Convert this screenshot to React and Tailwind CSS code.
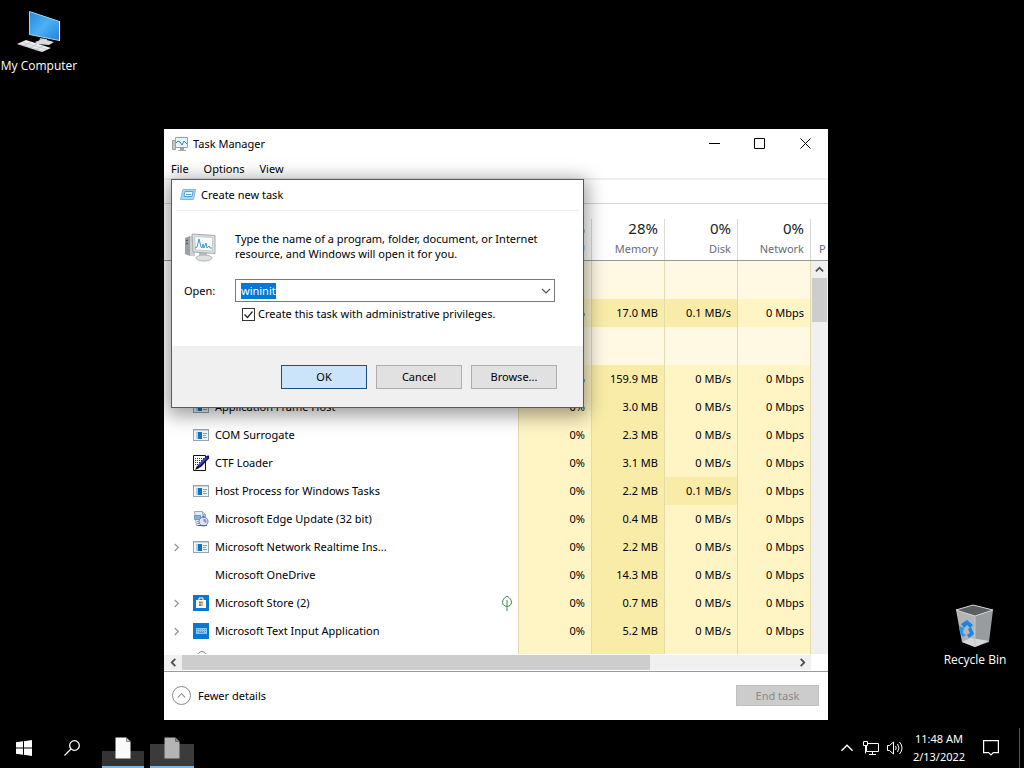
import React, { useEffect, useRef, useState } from 'react';

const groupTint = 'bg-[#fff8e2]';
const low = 'bg-[#fff4c4]';
const mid = 'bg-[#f9eca8]';

const processes = [
  { group: true },
  { name: '', icon: null, cpu: '0%', memory: '17.0 MB', disk: '0.1 MB/s', network: '0 Mbps', busyDisk: true },
  { group: true },
  { name: '', icon: null, cpu: '0%', memory: '159.9 MB', disk: '0 MB/s', network: '0 Mbps' },
  { name: 'Application Frame Host', icon: 'app', cpu: '0%', memory: '3.0 MB', disk: '0 MB/s', network: '0 Mbps' },
  { name: 'COM Surrogate', icon: 'app', cpu: '0%', memory: '2.3 MB', disk: '0 MB/s', network: '0 Mbps' },
  { name: 'CTF Loader', icon: 'ctf', cpu: '0%', memory: '3.1 MB', disk: '0 MB/s', network: '0 Mbps' },
  { name: 'Host Process for Windows Tasks', icon: 'app', cpu: '0%', memory: '2.2 MB', disk: '0.1 MB/s', network: '0 Mbps', busyDisk: true },
  { name: 'Microsoft Edge Update (32 bit)', icon: 'update', cpu: '0%', memory: '0.4 MB', disk: '0 MB/s', network: '0 Mbps' },
  { name: 'Microsoft Network Realtime Ins...', icon: 'app', expandable: true, cpu: '0%', memory: '2.2 MB', disk: '0 MB/s', network: '0 Mbps' },
  { name: 'Microsoft OneDrive', icon: null, cpu: '0%', memory: '14.3 MB', disk: '0 MB/s', network: '0 Mbps' },
  { name: 'Microsoft Store (2)', icon: 'store', expandable: true, leaf: true, cpu: '0%', memory: '0.7 MB', disk: '0 MB/s', network: '0 Mbps' },
  { name: 'Microsoft Text Input Application', icon: 'keyboard', expandable: true, cpu: '0%', memory: '5.2 MB', disk: '0 MB/s', network: '0 Mbps' },
  { name: '', icon: 'partial', cpu: '', memory: '', disk: '', network: '' },
];

const Chevron = ({ className, points, width = 2 }) => (
  <svg viewBox="0 0 10 10" className={className} fill="none" stroke="currentColor" strokeWidth={width}>
    <polyline points={points} />
  </svg>
);

const up = '1,7 5,3 9,7';
const down = '1,3 5,7 9,3';
const left = '7,1 3,5 7,9';
const right = '3,1 7,5 3,9';

const AppIcon = () => (
  <svg viewBox="0 0 16 16" className="size-4">
    <rect x="0.5" y="2.5" width="15" height="11" fill="#f1f5f9" stroke="#98a3ad" />
    <rect x="1" y="3" width="14" height="1" fill="#c9d3dc" />
    <rect x="3" y="5" width="2" height="7" fill="#a9d0ef" />
    <rect x="5" y="5" width="4" height="7" fill="#1272c4" />
    <path d="M10 6.5h4M10 8.5h3M10 10.5h4" stroke="#8ba0b4" />
  </svg>
);

const CtfIcon = () => (
  <svg viewBox="0 0 16 16" className="size-4">
    <path d="M0.5 0.5h12v15h-12z" fill="#fff" stroke="#111" />
    <path d="M2 3.5h9M2 5.5h8M2 7.5h6M2 9.5h4" stroke="#333" strokeDasharray="1 1" />
    <path d="M3 14l2-4 8-8.5q1.5-1.5 3-1v3l-8 8.5z" fill="#10107c" />
    <path d="M6 10.5l8-8" stroke="#7d80dc" />
    <path d="M2 15l2-4 2 2z" fill="#000" />
  </svg>
);

const UpdateIcon = () => (
  <svg viewBox="0 0 16 16" className="size-4">
    <path d="M1.5 0.5h8l3 3v11h-9z" fill="#e4edf7" stroke="#9aabc2" />
    <path d="M9.5 0.5v3h3" fill="none" stroke="#9aabc2" />
    <path d="M1.5 4.5h6v4h-6z" fill="#7cb6dd" stroke="#6f97bd" />
    <path d="M4 10.5h2M4 12.5h2" stroke="#8fa2b8" />
    <circle cx="10.5" cy="10.5" r="4.5" fill="#dde3f6" stroke="#6f78bd" />
    <path d="M10.5 10.5V7.5A3 3 0 0 1 13 12z" fill="#8b93d6" />
    <path d="M5 14.5h9" stroke="#5561a0" />
    <path d="M10.5 4.5v2" stroke="#5561a0" strokeWidth="2" />
  </svg>
);

const StoreIcon = () => (
  <svg viewBox="0 0 16 16" className="size-4">
    <rect width="16" height="16" fill="#0f76cf" />
    <path d="M6 5V3h4v2" fill="none" stroke="#fff" />
    <path d="M3 5h10v8H3z" fill="#fff" />
    <path d="M6 6.5h2v2H6z" fill="#e8522d" />
    <path d="M8 6.5h2v2H8z" fill="#7eb93d" />
    <path d="M6 9h2v2H6z" fill="#2d9be8" />
    <path d="M8 9h2v2H8z" fill="#f3b81f" />
  </svg>
);

const KeyboardIcon = () => (
  <svg viewBox="0 0 16 16" className="size-4">
    <rect width="16" height="16" fill="#0f76cf" />
    <rect x="3" y="5" width="11" height="6" fill="#8cc3f3" />
    <path d="M4 6.5h9M4 8.5h9" stroke="#4c9de2" strokeDasharray="1 1" />
    <path d="M6 9.5h5" stroke="#4c9de2" />
  </svg>
);

const PartialIcon = () => (
  <svg viewBox="0 0 16 16" className="size-4">
    <circle cx="9" cy="5" r="4.5" fill="#f3f3f3" stroke="#8d8d8d" />
  </svg>
);

const icons = {
  app: <AppIcon />,
  ctf: <CtfIcon />,
  update: <UpdateIcon />,
  store: <StoreIcon />,
  keyboard: <KeyboardIcon />,
  partial: <PartialIcon />,
};

const LeafIcon = () => (
  <svg viewBox="0 0 12 16" className="w-3 h-4" fill="none" stroke="#3c8a4e">
    <path d="M6 1C3 3 1.5 5 1.5 7.5S3.5 11 6 11.5C8.5 11 10.5 10 10.5 7.5S9 3 6 1zM6 5v11" />
  </svg>
);

const MonitorIcon = ({ className }) => (
  <svg viewBox="0 0 32 32" className={className}>
    <path d="M1 7l5-2v20l-5-2z" fill="#9ba0a4" />
    <path d="M6 5h5v20H6z" fill="#ced1d4" />
    <path d="M2 10l2-1M2 13l2-1" stroke="#444" />
    <path d="M15 22h8v4h-8z" fill="#b5babd" />
    <ellipse cx="20" cy="27" rx="8" ry="3" fill="#dfe1e3" stroke="#b3b7ba" />
    <path d="M8 3l23 1.5v18l-22-1.5z" fill="#dcdfe1" stroke="#a5aaad" />
    <path d="M10.5 5.5l18 1v13.500l-17-1z" fill="#f8fcff" stroke="#c5ccd1" />
    <path d="M11 17l2-1 2-8 2 8 1 1 1-4 1 4 2-5 1 5 2-2 1 2h2" fill="none" stroke="#3f9ac6" />
  </svg>
);

const TaskManagerIcon = () => (
  <svg viewBox="0 0 16 16" className="size-4">
    <path d="M0.5 4.5h3v9h-3z" fill="#c4c8cb" stroke="#989da1" />
    <path d="M3.5 1.5h12v10h-12z" fill="#e9f4fa" stroke="#98a1a7" />
    <path d="M4 7l2-2 2 1 2 3 2-4 3 3" fill="none" stroke="#2787b5" />
    <path d="M8 12h4v2H8z" fill="#9ba1a5" />
    <path d="M6 14.5h8" stroke="#a9aeb2" />
  </svg>
);

const RunIcon = () => (
  <svg viewBox="0 0 16 12" className="w-4 h-3">
    <path d="M3 0.5h12.5l-2 10H0.5z" fill="#a9d5ef" stroke="#86b8d8" />
    <path d="M5 2.5h8l-1 5H4z" fill="#e6f6ff" stroke="#5ba0ca" />
    <path d="M6 5.5h5" stroke="#5ba0ca" />
  </svg>
);

const ComputerIcon = () => (
  <svg viewBox="0 0 48 48" className="size-12">
    <defs>
      <linearGradient id="screen" x1="0" y1="0" x2="1" y2="1">
        <stop offset="0" stopColor="#2588dc" />
        <stop offset="0.5" stopColor="#4bb0f5" />
        <stop offset="1" stopColor="#1d83d8" />
      </linearGradient>
    </defs>
    <path d="M25 30l7 1v4l-8-1z" fill="#aeb5ba" />
    <path d="M20 34l8-3 11 3-5 3-12-1z" fill="#d9dcde" />
    <path d="M14.5 3.5l30 10v19l-30-6z" fill="url(#screen)" stroke="#9ed4f5" />
    <path d="M44.5 13v20" stroke="#e8f4fb" />
    <path d="M2 36l9-4 25 8-9 4z" fill="#eceeef" />
    <path d="M5 36l23 7M8 34.5l24 7M8 38l8-4M14 40l8-4M20 42l8-4" stroke="#b9bec2" strokeWidth="0.7" />
  </svg>
);

const RecycleIcon = () => (
  <svg viewBox="0 0 48 48" className="size-12">
    <path d="M5 8L24 13v32L11 40z" fill="#b3b5b6" />
    <path d="M24 13L42 8l-4 32-14 5z" fill="#999c9e" />
    <path d="M5 8L22 3l20 5-18 6z" fill="#5b5e60" stroke="#d5d7d8" />
    <path d="M11 40l9-4 18 3-14 6z" fill="#d6d8d9" />
    <path d="M24 14v31" stroke="#c2c5c7" />
    <path d="M10 22l6-4 6 5-3 3-3-3-3 3z" fill="#1787e5" />
    <path d="M8 24l5 2-1 5 3 2-3 2-3-4z" fill="#2a96ee" />
    <path d="M20 25l3 7-5 4-2-3 3-2-2-4z" fill="#1787e5" />
  </svg>
);

const FileIcon = ({ dim }) => (
  <svg viewBox="0 0 16 22" className="w-4 h-[22px]">
    <path d="M0.5 0.5h11l4 4v17h-15z" fill={dim ? '#b4b4b4' : '#fafafa'} />
    <path d="M11.5 0.5v4h4z" fill={dim ? '#8f8f8f' : '#c9c9c9'} stroke="#333" strokeWidth="0.5" />
  </svg>
);

const HeaderCell = ({ value, label }) => (
  <th className="p-0 pt-[15px] font-normal align-top">
    <div className="h-[41px] border-l border-[#d9d9d9] pr-1.5 text-right">
      <div className="text-[15px] leading-[18px] text-[#222]">{value}</div>
      <div className="leading-[23px] text-[#6b6b78]">{label}</div>
    </div>
  </th>
);

const ProcessRow = ({ process }) => {
  const { name, icon, expandable, leaf, group, cpu, memory, disk, network, busyDisk } = process;
  const cell = 'p-0 pr-1.5 text-right border-l border-[#e2dbad]';

  if (group) {
    return (
      <tr className="h-[38px]">
        <td className="p-0" />
        {[0, 1, 2, 3].map((i) => (
          <td key={i} className={`${cell} ${groupTint}`} />
        ))}
        <td className="p-0 border-l border-[#e2dbad]" />
      </tr>
    );
  }

  return (
    <tr className="h-7">
      <td className="p-0">
        <div className="flex items-center h-7 pl-2 pr-[5px]">
          <span className="w-[21px]">
            {expandable && <Chevron className="size-[9px] text-[#999]" points={right} width={1.5} />}
          </span>
          <span className="w-[22px]">{icon && icons[icon]}</span>
          <span className="flex-1">{name}</span>
          {leaf && <LeafIcon />}
        </div>
      </td>
      <td className={`${cell} ${low}`}>{cpu}</td>
      <td className={`${cell} ${mid}`}>{memory}</td>
      <td className={`${cell} ${busyDisk ? mid : low}`}>{disk}</td>
      <td className={`${cell} ${low}`}>{network}</td>
      <td className="p-0 border-l border-[#e2dbad]" />
    </tr>
  );
};

const TaskManager = () => (
  <section className="absolute left-[164px] top-[129px] w-[664px] bg-white">
    {/* Title bar */}
    <header className="flex items-center h-[29px] pl-2">
      <TaskManagerIcon />
      <h1 className="flex-1 pl-[5px]">Task Manager</h1>
      <button aria-label="Minimize" className="flex items-center justify-center w-[46px] h-[29px]">
        <svg viewBox="0 0 11 11" className="size-[11px]" stroke="#000"><path d="M0 5.5h11" /></svg>
      </button>
      <button aria-label="Maximize" className="flex items-center justify-center w-[45px] h-[29px]">
        <svg viewBox="0 0 11 11" className="size-[11px]" stroke="#000" fill="none"><path d="M0.5 0.5h10v10h-10z" /></svg>
      </button>
      <button aria-label="Close" className="flex items-center justify-center w-[46px] h-[29px]">
        <svg viewBox="0 0 11 11" className="size-[11px]" stroke="#000"><path d="M0.5 0.5l10 10M10.5 0.5l-10 10" /></svg>
      </button>
    </header>

    <nav className="flex h-5 pt-px pl-[7px] gap-[15px]">
      <button>File</button>
      <button>Options</button>
      <button>View</button>
    </nav>
    <div className="h-[26px] border-t-2 border-b border-t-[#efefef] border-b-[#d4d4d4]" />

    {/* Process list */}
    <div className="grid h-[450px] overflow-hidden">
      <table className="col-start-1 row-start-1 self-start w-full table-fixed border-separate border-spacing-0">
        <colgroup>
          <col />
          <col className="w-[73px]" />
          <col className="w-[73px]" />
          <col className="w-[73px]" />
          <col className="w-[73px]" />
          <col className="w-[18px]" />
        </colgroup>
        <thead>
          <tr className="h-[57px] [&>th]:border-b [&>th]:border-[#999]">
            <th aria-label="Name" className="p-0" />
            <HeaderCell value="0%" label="CPU" />
            <HeaderCell value="28%" label="Memory" />
            <HeaderCell value="0%" label="Disk" />
            <HeaderCell value="0%" label="Network" />
            <th className="p-0 pt-[15px] font-normal align-top">
              <div className="h-[41px] border-l border-[#d9d9d9] pl-2 pt-[18px] text-left leading-[23px] text-[#6b6b78]">P</div>
            </th>
          </tr>
        </thead>
        <tbody>
          {processes.map((process, index) => (
            <ProcessRow key={index} process={process} />
          ))}
        </tbody>
      </table>
      <div className="col-start-1 row-start-1 justify-self-end flex flex-col w-[17px] mt-[57px] pr-px bg-[#f0f0f0] text-[#505050]">
        <button aria-label="Scroll up" className="flex items-center justify-center h-[17px]">
          <Chevron className="size-[9px]" points={up} />
        </button>
        <div className="h-11 ml-px bg-[#cdcdcd]" />
        <div className="flex-1" />
        <button aria-label="Scroll down" className="flex items-center justify-center h-[17px]">
          <Chevron className="size-[9px]" points={down} />
        </button>
      </div>
    </div>

    <div className="flex h-[18px] py-px border-b border-[#999]">
      <div className="flex flex-1 bg-[#f0f0f0] text-[#505050]">
        <button aria-label="Scroll left" className="flex items-center justify-center w-[18px]">
          <Chevron className="size-[9px]" points={left} />
        </button>
        <div className="flex-1"><div className="w-[76.5%] h-full bg-[#cdcdcd]" /></div>
        <button aria-label="Scroll right" className="flex items-center justify-center w-[17px]">
          <Chevron className="size-[9px]" points={right} />
        </button>
      </div>
      <div className="w-[17px]" />
    </div>

    <footer className="flex items-center justify-between h-12 pb-px pl-2 pr-[9px]">
      <button className="flex items-center gap-[7px]">
        <span className="flex items-center justify-center size-[19px] rounded-full border border-[#8a8a8a] text-[#8a8a8a]">
          <Chevron className="size-[9px]" points={up} width={1.2} />
        </span>
        Fewer details
      </button>
      <button disabled className="w-[83px] h-[21px] border border-[#bfbfbf] bg-[#cccccc] text-[#8a8a8a]">
        End task
      </button>
    </footer>
  </section>
);

const CreateTaskDialog = () => {
  const [command, setCommand] = useState('wininit');
  const [elevated, setElevated] = useState(true);
  const inputRef = useRef(null);

  useEffect(() => {
    inputRef.current.focus();
    inputRef.current.select();
  }, []);

  return (
    <form
      onSubmit={(e) => e.preventDefault()}
      className="absolute left-[171px] top-[179px] w-[413px] border border-[#5a5a5a] bg-white shadow-[0_4px_18px_3px_rgba(0,0,0,0.4)]"
    >
      <header className="flex items-center h-[31px] mx-1 pl-1 gap-[5px] border-b border-[#ededed]">
        <RunIcon />
        <h2>Create new task</h2>
      </header>

      <div className="h-[135px] px-3 pt-5">
        <div className="flex gap-[19px]">
          <MonitorIcon className="size-8" />
          <p className="leading-[15px]">
            Type the name of a program, folder, document, or Internet<br />
            resource, and Windows will open it for you.
          </p>
        </div>
        <div className="flex items-center mt-4 pr-4">
          <label htmlFor="command" className="w-[51px]">Open:</label>
          <div className="flex flex-1 h-[23px] border border-[#7a7a7a]">
            <input
              id="command"
              ref={inputRef}
              value={command}
              onChange={(e) => setCommand(e.target.value)}
              className="flex-1 min-w-0 pl-[5px] leading-4 outline-none caret-transparent selection:bg-[#0078d7] selection:text-white"
            />
            <button type="button" aria-label="Show history" className="flex items-center justify-center w-[17px]">
              <Chevron className="size-[10px] text-[#555]" points={down} width={1.2} />
            </button>
          </div>
        </div>
        <label className="flex items-center gap-[3px] mt-1 pl-[58px]">
          <span className="grid size-[13px]">
            <input
              type="checkbox"
              checked={elevated}
              onChange={(e) => setElevated(e.target.checked)}
              className="col-start-1 row-start-1 size-[13px] appearance-none border border-[#333]"
            />
            {elevated && (
              <svg viewBox="0 0 13 13" className="col-start-1 row-start-1 size-[13px] pointer-events-none" fill="none" stroke="#222">
                <path d="M2.5 6.5l3 3 5-6" strokeWidth="1.2" />
              </svg>
            )}
          </span>
          Create this task with administrative privileges.
        </label>
      </div>

      <div className="flex justify-end gap-[9px] h-[61px] pt-[19px] pr-[26px] bg-[#f0f0f0]">
        <button className="w-[86px] h-6 border border-[#1b4f7d] bg-[#cce4f9]">OK</button>
        <button type="button" className="w-[86px] h-6 border border-[#adadad] bg-[#e1e1e1]">Cancel</button>
        <button type="button" className="w-[86px] h-6 border border-[#adadad] bg-[#e1e1e1]">Browse...</button>
      </div>
    </form>
  );
};

const Taskbar = () => (
  <footer className="flex items-stretch h-10 text-white">
    <button aria-label="Start" className="flex items-center justify-center w-12">
      <svg viewBox="0 0 16 16" className="size-4" fill="#fff">
        <path d="M0 2.3l7-1v6.2H0zM8 1.2L16 0v7.5H8zM0 8.5h7v6.2l-7-1zM8 8.5h8V16l-8-1.2z" />
      </svg>
    </button>
    <button aria-label="Search" className="flex items-center justify-center w-12">
      <svg viewBox="0 0 16 16" className="size-4" fill="none" stroke="#fff" strokeWidth="1.3">
        <circle cx="10.5" cy="5.5" r="4.8" />
        <path d="M7 9l-6.5 6.5" />
      </svg>
    </button>
    <div className="flex items-end gap-1.5 pl-1.5">
      <button aria-label="Document" className="flex items-start justify-center w-[42px] h-[31px] border-b-2 border-[#76b9ed] bg-linear-to-b from-transparent from-50% to-[#333] to-50%">
        <FileIcon />
      </button>
      <button aria-label="Document in background" className="flex items-start justify-center w-11 h-[31px] border-b-2 border-[#76b9ed] bg-linear-to-b from-transparent from-25% to-[#3b3b3b] to-25%">
        <FileIcon dim />
      </button>
    </div>
    <div className="flex flex-1 items-center justify-end">
      <button aria-label="Show hidden icons" className="flex justify-center w-6">
        <Chevron className="size-3.5" points={up} width={1} />
      </button>
      <button aria-label="Network" className="flex justify-center w-6">
        <svg viewBox="0 0 16 16" className="size-4" fill="none" stroke="#fff">
          <path d="M5 3.5h10.5v8H3.5V6M0.5 1.5h4v4h-4zM2.5 5.5v8M9.5 11.5v3M6 14.5h7" />
        </svg>
      </button>
      <button aria-label="Volume" className="flex justify-center w-6">
        <svg viewBox="0 0 18 16" className="w-[18px] h-4" fill="none" stroke="#fff">
          <path d="M1.5 5.5h2l4-3.5v12l-4-3.5h-2zM9.5 6q1.5 2 0 4M11.5 4q3 4 0 8M13.5 2q5 6 0 12" />
        </svg>
      </button>
      <div className="w-[64px] text-center leading-[18px]">
        <div>11:48 AM</div>
        <div>2/13/2022</div>
      </div>
      <button aria-label="Notifications" className="flex justify-center w-10">
        <svg viewBox="0 0 16 16" className="size-4" fill="none" stroke="#fff" strokeWidth="1.2">
          <path d="M0.6 0.6h14.8v12h-5l-2.4 2.4-2.4-2.4h-5z" />
        </svg>
      </button>
      <div className="w-[5px] ml-2 h-10 border-l border-[#555]" />
    </div>
  </footer>
);

const App = () => (
  <div className="relative flex flex-col min-h-screen overflow-hidden bg-black text-[11px] leading-4 text-black font-['Noto_Sans','Open_Sans',sans-serif]">
    <main className="flex flex-1 justify-between text-white text-[12px] font-['Open_Sans',sans-serif]">
      <button className="self-start flex flex-col items-center w-[78px] pt-2 gap-0.5 whitespace-nowrap">
        <ComputerIcon />
        My Computer
      </button>
      <button className="self-end flex flex-col items-center w-[98px] pb-[60px] gap-0.5 whitespace-nowrap">
        <RecycleIcon />
        Recycle Bin
      </button>
    </main>
    <TaskManager />
    <CreateTaskDialog />
    <Taskbar />
  </div>
);

export default App;
